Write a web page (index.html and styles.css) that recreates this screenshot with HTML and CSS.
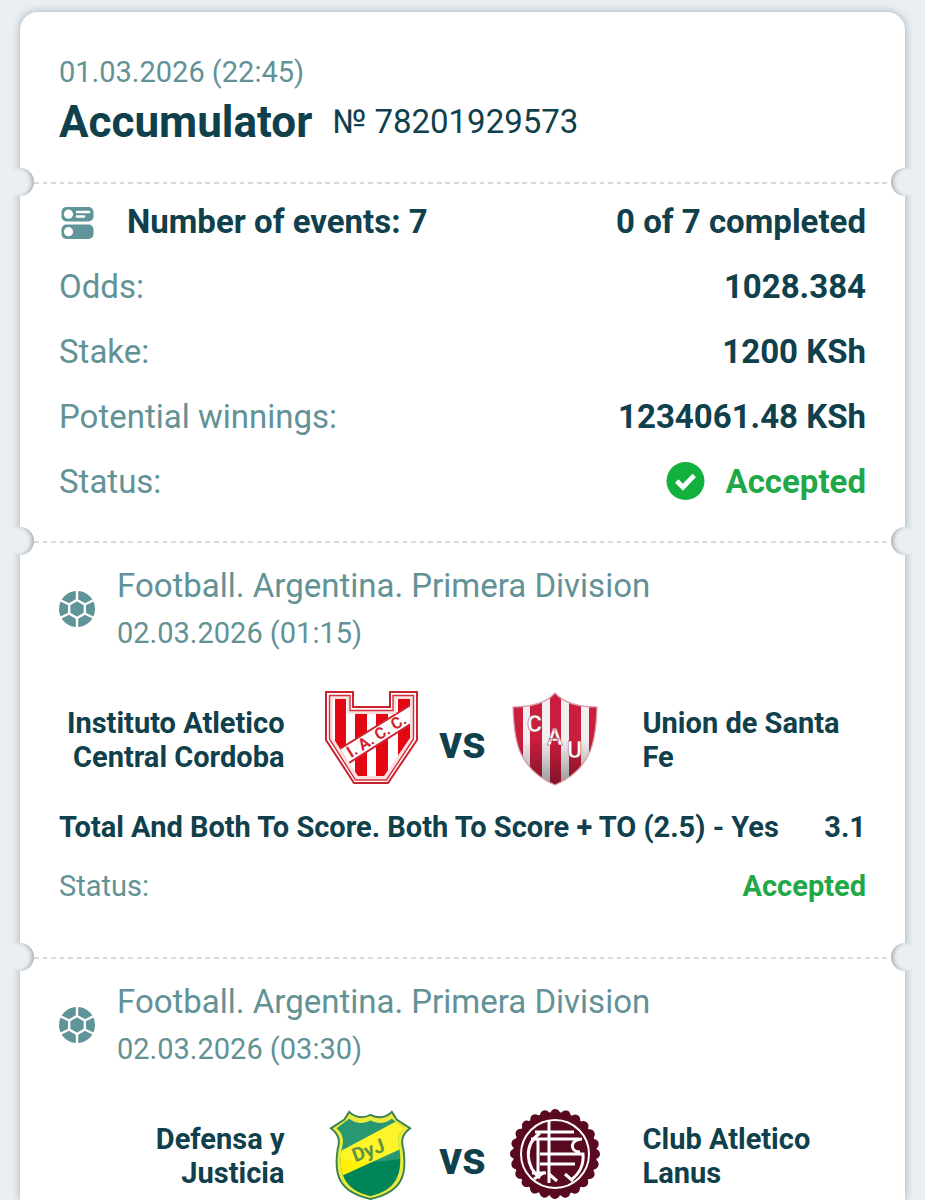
FILE: index.html
```html
<!DOCTYPE html>
<html lang="en">
<head>
  <meta charset="UTF-8" />
  <meta name="viewport" content="width=device-width, initial-scale=1" />
  <title>Accumulator</title>
  <link rel="stylesheet" href="styles.css">
</head>
<body>
  <svg class="sprite" aria-hidden="true">
    <symbol id="ball" viewBox="0 0 36 36">
      <circle cx="18" cy="18" r="18" fill="#5f9499" />
      <g fill="none" stroke="#fff" stroke-width="2.4">
        <path d="M18 9l7.8 4.500v9L18 27l-7.800-4.500v-9z" />
        <path d="M18 -1v10M18 27v10M25.800 13.500L35 9M25.800 22.500L35 27M10.200 22.500L1 27M10.200 13.500L1 9" />
      </g>
    </symbol>
  </svg>

  <main class="ticket">
    <header class="ticket-head">
      <time class="date">01.03.2026 (22:45)</time>
      <div class="ticket-title">
        <h1>Accumulator</h1>
        <span>№ 78201929573</span>
      </div>
    </header>

    <section class="summary">
      <div class="row strong">
        <svg class="icon-events" viewBox="0 0 36 36">
          <rect x="2.500" y="3" width="32" height="14.500" rx="5" fill="#5f9499" />
          <rect x="2.500" y="20.500" width="32" height="14.500" rx="5" fill="#5f9499" />
          <circle cx="9.500" cy="10.200" r="4.600" fill="#fff" />
          <circle cx="9.500" cy="27.700" r="4.600" fill="#fff" />
          <path d="M18 8H30M18 12.500h7" stroke="#fff" stroke-width="2.600" stroke-linecap="round" />
        </svg>
        <span class="events-label">Number of events: 7</span>
        <span class="value">0 of 7 completed</span>
      </div>
      <div class="row">
        <span class="label">Odds:</span>
        <span class="value">1028.384</span>
      </div>
      <div class="row">
        <span class="label">Stake:</span>
        <span class="value">1200 KSh</span>
      </div>
      <div class="row">
        <span class="label">Potential winnings:</span>
        <span class="value">1234061.48 KSh</span>
      </div>
      <div class="row">
        <span class="label">Status:</span>
        <span class="value accepted">
          <svg class="icon-check" viewBox="0 0 38 38">
            <circle cx="19" cy="18.500" r="18.500" fill="#12b03c" />
            <path d="M10.500 18.500l6 6L27.500 13" fill="none" stroke="#fff" stroke-width="4.800" />
          </svg>
          Accepted
        </span>
      </div>
    </section>

    <section class="event">
      <div class="event-head">
        <svg class="icon-ball"><use href="#ball" /></svg>
        <div>
          <h2>Football. Argentina. Primera Division</h2>
          <time class="date">02.03.2026 (01:15)</time>
        </div>
      </div>
      <div class="match">
        <p class="team home">Instituto Atletico Central Cordoba</p>
        <svg class="crest" viewBox="0 0 92 92">
          <clipPath id="instituto"><path d="M8 7h14v15h49V7h14v39L59 84H33L8 46z" /></clipPath>
          <path d="M1 0h27v15h37V0h27v48L63 91H29L1 48z" fill="#fff" stroke="#c9232f" stroke-width="2" />
          <path d="M4.500 3.500h20.500v15h43v-15h20.500v43.500L61.500 88H30.500L4.500 47z" fill="#fae0e0" stroke="#d3303b" stroke-width="1.400" />
          <g clip-path="url(#instituto)">
            <path d="M0 0h92v92H0z" fill="#fff" />
            <path d="M10 0h11v92H10zM30 0h12v92H30zM51 0h12v92H51zM73 0h13v92H73z" fill="#e30613" />
            <path d="M5 63L92 9v19L5 83z" fill="#fff" stroke="#cf2430" stroke-width="2" />
          </g>
          <g class="crest-text" fill="#d4202c" transform="translate(26 66) rotate(-32)">
            <text>I. A. C. C.</text>
          </g>
        </svg>
        <span class="versus">vs</span>
        <svg class="crest" viewBox="0 0 92 92">
          <defs>
            <clipPath id="union"><path d="M46 1C38 10 24 15 4 15c1 30 3 61 42 78 39-17 41-48 42-78C68 15 54 10 46 1z" /></clipPath>
            <linearGradient id="shade" x1="0" y1="0" x2="0" y2="1">
              <stop offset=".5" stop-color="#000" stop-opacity="0" />
              <stop offset="1" stop-color="#000" stop-opacity=".4" />
            </linearGradient>
          </defs>
          <g clip-path="url(#union)">
            <path d="M0 0h92v96H0z" fill="#f3eff0" />
            <path d="M2 0h12v96H2zM21 0h12v96H21zM41 0h11v96H41zM60 0h12v96H60zM80 0h9v96h-9z" fill="#cb1d3e" />
            <path d="M0 0h92v96H0z" fill="url(#shade)" />
          </g>
          <path d="M46 1C38 10 24 15 4 15c1 30 3 61 42 78 39-17 41-48 42-78C68 15 54 10 46 1z" fill="none" stroke="#d99ca7" stroke-width="1.200" />
          <g class="union-text" fill="#fff" stroke="#9a3046" stroke-width=".5">
            <text x="18" y="40">C</text>
            <text x="38" y="53">A</text>
            <text x="58" y="66">U</text>
          </g>
        </svg>
        <p class="team">Union de Santa Fe</p>
      </div>
      <div class="bet">
        <span>Total And Both To Score. Both To Score + TO (2.5) - Yes</span>
        <span>3.1</span>
      </div>
      <div class="bet-status">
        <span class="label">Status:</span>
        <span class="value accepted">Accepted</span>
      </div>
    </section>

    <section class="event">
      <div class="event-head">
        <svg class="icon-ball"><use href="#ball" /></svg>
        <div>
          <h2>Football. Argentina. Primera Division</h2>
          <time class="date">02.03.2026 (03:30)</time>
        </div>
      </div>
      <div class="match">
        <p class="team home">Defensa y Justicia</p>
        <svg class="crest" viewBox="0 -2 95 95">
          <defs>
            <clipPath id="defensa"><path d="M25 9c6 5 15 6 22 2 8 4 16 3 22-2l13 10c-7 6-8 13-5 22 3 24-2 41-30 48C19 82 14 65 17 41c3-9 2-16-5-22z" /></clipPath>
          </defs>
          <path d="M25 2c6 6 15 7 22 3 8 4 16 3 22-3l5 8 14 9c-8 6-10 12-7 22 4 27-2 44-34 51C15 85 9 68 13 41c3-10 1-16-7-22l14-9z" fill="#e9ec3d" stroke="#3d8054" stroke-width="2" />
          <g clip-path="url(#defensa)">
            <path d="M0 0h92v92H0z" fill="#008558" />
            <path d="M0 51L92 2v32L0 76z" fill="#fff100" />
            <path d="M0 0h92v47Q46 60 0 47z" fill="#fff" opacity=".16" />
          </g>
          <g class="defensa-text" fill="#5f9440" transform="translate(31 54) rotate(-20)">
            <text>DyJ</text>
          </g>
        </svg>
        <span class="versus">vs</span>
        <svg class="crest" viewBox="0 0 92 92">
          <circle cx="46" cy="46" r="42" fill="#5a0a20" />
          <circle cx="46" cy="46" r="40" fill="none" stroke="#5a0a20" stroke-width="10" stroke-linecap="round" stroke-dasharray="0.010 10.462" />
          <circle cx="46" cy="46" r="34" fill="none" stroke="#fff" stroke-width="2" />
          <g fill="none" stroke="#fff" stroke-width="3">
            <path d="M40 13v62M26 24h39M22 31h48M31 46h35M31 56h35" />
            <path d="M31 25C13 38 18 60 31 70M29 31v38M23 65h14M25 71l11-7M40 66l8 7" />
            <path d="M73 31c-12 0-13 13-2 13M66 46h8c1 11-4 20-12 26M56 66l8 7" />
          </g>
        </svg>
        <p class="team">Club Atletico Lanus</p>
      </div>
    </section>
  </main>
</body>
</html>
```
FILE: styles.css
```css
* {
  box-sizing: border-box;
}

body {
  margin: 0;
  min-height: 100vh;
  padding: 12px 20px 0;
  display: flex;
  flex-direction: column;
  background-color: #eaeff3;
  color: #0f404b;
  font-family: Roboto, "Liberation Sans", sans-serif;
  font-size: 33px;
}

h1,
h2,
p {
  margin: 0;
}

.sprite {
  position: absolute;
  width: 0;
  height: 0;
}

.ticket {
  flex: 1;
  background-color: #fff;
  border-radius: 18px 18px 0 0;
  box-shadow: 0 0 9px rgba(60, 70, 75, 0.4);
}

.date {
  display: block;
  color: #629296;
  font-size: 29px;
  line-height: 46px;
}

.ticket-head {
  padding: 37px 39px 33px;
}

.ticket-title {
  display: flex;
  align-items: center;
  gap: 20px;
  line-height: 54px;
}

.ticket-title h1 {
  font-size: 44px;
  font-weight: 700;
}

.summary,
.event {
  position: relative;
  padding: 7px 39px 27px;
  /* perforation line */
  background: repeating-linear-gradient(90deg, #d5dbdf 0 0.55%, transparent 0.55% 1%) 14px -1px / calc(100% - 28px) 3px no-repeat;
}

/* ticket notches */
.summary::before,
.summary::after,
.event::before,
.event::after {
  content: "";
  position: absolute;
  top: -14px;
  width: 28px;
  height: 28px;
  border-radius: 14px;
  background-color: #eaeff3;
}

.summary::before,
.event::before {
  left: -14px;
  box-shadow: inset -4px 0 4px -2px rgba(60, 70, 75, 0.4);
}

.summary::after,
.event::after {
  right: -14px;
  box-shadow: inset 4px 0 4px -2px rgba(60, 70, 75, 0.4);
}

.row {
  display: flex;
  align-items: center;
  line-height: 65px;
}

.strong,
.value {
  font-weight: 700;
}

.label {
  color: #629296;
}

.value {
  margin-left: auto;
}

.accepted {
  display: flex;
  align-items: center;
  gap: 20px;
  color: #1fa847;
}

.icon-events {
  width: 36px;
  height: 36px;
}

.events-label {
  margin-left: 32px;
}

.icon-check {
  width: 39px;
  height: 39px;
}

.event {
  padding-top: 21px;
  padding-bottom: 48px;
}

.event:last-child {
  padding-bottom: 0;
}

.event-head {
  display: flex;
  align-items: center;
  gap: 22px;
}

.icon-ball {
  width: 36px;
  height: 36px;
}

.event-head h2 {
  color: #629296;
  font-size: 33px;
  font-weight: 400;
  line-height: 48px;
}

.match {
  display: grid;
  grid-template-columns: 1fr 92px 92px 92px 1fr;
  align-items: center;
  margin-top: 36px;
}

.team {
  padding-top: 4px;
  padding-left: 42px;
  font-size: 29px;
  font-weight: 700;
  line-height: 34px;
}

.home {
  padding-left: 0;
  padding-right: 40px;
  text-align: right;
}

.crest {
  width: 92px;
  height: 92px;
  overflow: visible;
}

.versus {
  padding-top: 8px;
  font-size: 46px;
  font-weight: 700;
  line-height: 54px;
  text-align: center;
}

.bet,
.bet-status {
  display: flex;
  justify-content: space-between;
  font-size: 29px;
  line-height: 46px;
}

.bet {
  margin-top: 20px;
  font-weight: 700;
}

.bet-status {
  margin-top: 13px;
}

.crest-text {
  font-size: 16px;
  font-weight: 700;
}

.union-text {
  font-size: 23px;
  font-weight: 700;
}

.defensa-text {
  font-size: 20px;
  font-weight: 700;
}
```
